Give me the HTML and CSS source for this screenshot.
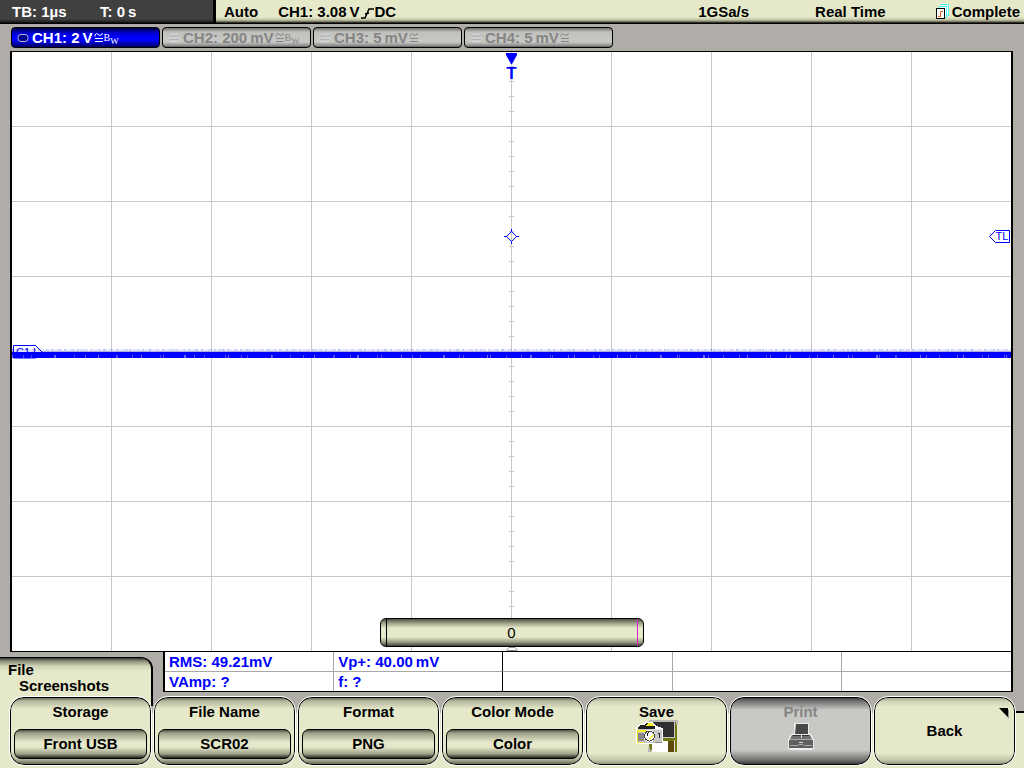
FILE: index.html
```html
<!DOCTYPE html>
<html lang="en">
<head>
<meta charset="utf-8">
<title>Oscilloscope</title>
<link rel="stylesheet" href="styles.css">
</head>
<body>
<svg class="symbols" aria-hidden="true">
  <symbol id="coupling" viewBox="0 0 9 11"><path d="M1 4.500V3L2.500 1.500L6 3.500L8 2.500V1M1 6.500H9M1 9.500H9" fill="none" stroke="currentColor"/></symbol>
  <symbol id="knob" viewBox="0 0 12 10"><path d="M3 .5H9L11.500 3V7L9 9.500H3L.5 7V3Z" fill="#d4d4d4"/><path d="M1 3H11M1 6.500H11" stroke="#b2b2b8" stroke-width="1.500"/></symbol>
</svg>
<div class="scope">
  <header class="status">
    <div class="timebase"><span class="tb">TB: 1µs</span><span>T: 0&#8201;s</span></div>
    <div class="acquisition">
      <span>Auto</span>
      <span class="trigger">CH1: 3.08&#8201;V<svg width="15" height="12" viewBox="0 0 15 12"><path d="M1 11H5L9 2H14M5 7L9 6" fill="none" stroke="#000" stroke-width="1.500"/></svg>DC</span>
      <span class="rate">1GSa/s</span>
      <span class="mode">Real Time</span>
      <span class="state"><svg width="14" height="16" viewBox="0 0 14 16"><path d="M5 1.500V.5H12.500V11.500H11M3 4V2.500H10.500V13.500H9" fill="#fff" stroke="#50f0f0"/><rect x=".5" y="4.500" width="8" height="10" fill="#fff" stroke="#000"/><path d="M2 12.500H4.500V7.500H7" fill="none" stroke="#f06010"/></svg>Complete</span>
    </div>
  </header>

  <nav class="channels">
    <button class="channel active"><svg class="knob" viewBox="0 0 12 10"><rect x="1" y="1.500" width="10" height="7" rx="3" fill="#000090" stroke="#b8b8c8"/></svg>CH1: 2&#8201;V<svg class="coupling"><use href="#coupling"/></svg><span class="bw">B<sub>W</sub></span></button>
    <button class="channel"><svg class="knob"><use href="#knob"/></svg>CH2: 200&#8201;mV<svg class="coupling"><use href="#coupling"/></svg><span class="bw">B<sub>W</sub></span></button>
    <button class="channel"><svg class="knob"><use href="#knob"/></svg>CH3: 5&#8201;mV<svg class="coupling"><use href="#coupling"/></svg></button>
    <button class="channel"><svg class="knob"><use href="#knob"/></svg>CH4: 5&#8201;mV<svg class="coupling"><use href="#coupling"/></svg></button>
  </nav>

  <main class="plot">
    <svg class="grid" aria-hidden="true">
      <g transform="translate(-1 -1)" fill="#c8c8c8">
        <rect x="10%" width="1" height="101%"/><rect x="20%" width="1" height="101%"/><rect x="30%" width="1" height="101%"/><rect x="40%" width="1" height="101%"/><rect x="50%" width="1" height="101%"/><rect x="60%" width="1" height="101%"/><rect x="70%" width="1" height="101%"/><rect x="80%" width="1" height="101%"/><rect x="90%" width="1" height="101%"/>
        <rect y="12.5%" width="101%" height="1"/><rect y="25%" width="101%" height="1"/><rect y="37.5%" width="101%" height="1"/><rect y="50%" width="101%" height="1"/><rect y="62.5%" width="101%" height="1"/><rect y="75%" width="101%" height="1"/><rect y="87.5%" width="101%" height="1"/>
      </g>
    </svg>
    <div class="ticks"></div>
    <svg class="marker position" viewBox="0 0 14 34"><path d="M1 1H12V3L7 12H6L1 3Z" fill="#00f"/><text x="6.500" y="27">T</text></svg>
    <svg class="marker crosshair" viewBox="0 0 15 15"><path d="M7.500 2.500L12.500 7.500L7.500 12.500L2.500 7.500ZM7.500 0V3M7.500 12V15M0 7.500H3M12 7.500H15" fill="none" stroke="#00f"/></svg>
    <svg class="marker level" viewBox="0 0 22 14"><path d="M20.500 .5V12.500H6.500L.5 6.500L6.500 .5Z" fill="#fff" stroke="#00f"/><text x="13" y="10">TL</text></svg>
    <svg class="marker ground" viewBox="0 0 30 14"><path d="M.5 .5H22.500L29 7L22.500 13H.5Z" fill="#fff" stroke="#00f"/><text x="3" y="11">C1 L</text></svg>
    <div class="trace"></div>
    <svg class="marker origin" viewBox="0 0 12 4"><path d="M3 .5H9L11 2.500V3.500H1V2.500Z" fill="#fff" stroke="#909090"/></svg>
    <output class="progress">0</output>
  </main>

  <div class="info">
    <h1 class="tab">File<span>Screenshots</span></h1>
    <div class="readout">
      <table class="measurements">
        <tr><td>RMS: 49.21mV</td><td>Vp+: 40.00&#8201;mV</td><td></td><td></td><td></td></tr>
        <tr><td>VAmp: ?</td><td>f: ?</td><td></td><td></td><td></td></tr>
      </table>
    </div>
  </div>

  <footer class="softkeys">
    <button class="key"><span>Storage</span><span class="value">Front USB</span></button>
    <button class="key"><span>File Name</span><span class="value">SCR02</span></button>
    <button class="key"><span>Format</span><span class="value">PNG</span></button>
    <button class="key"><span>Color Mode</span><span class="value">Color</span></button>
    <button class="key plain"><span>Save</span>
      <svg class="save" viewBox="0 0 42 34" shape-rendering="crispEdges">
        <path d="M13 1H41V32H15L13 30Z" fill="#707810"/><path d="M13 1H41V5M13 27V31H17" stroke="#b8b8b0" stroke-width="2" fill="none"/>
        <rect x="16" y="2" width="22" height="15" fill="#303030"/><path d="M38.500 2V17.500H27" stroke="#c8c8c8" fill="none"/>
        <rect x="16" y="21" width="16" height="11" fill="#fff"/><rect x="32" y="21" width="6" height="11" fill="#604808"/><path d="M38.500 20V32" stroke="#ddd"/>
        <path d="M0 8L3 4L8 3L10 2H17L20 6L27 8V24H0Z" fill="#fff"/>
        <path d="M2 7L4 5H8L10 3H16L19 7V9H2Z" fill="#202020"/><path d="M10 6L12 3H15L18 6Z" fill="#f8f020"/>
        <rect x="1" y="9" width="25" height="14" fill="#c8c8c8"/><rect x="1" y="10" width="9" height="2" fill="#f8f020"/><rect x="2" y="13" width="6" height="8" fill="#888"/><path d="M16 9.500H26" stroke="#e8e8e8"/>
        <path d="M1.500 10V22.500H8" fill="none" stroke="#e8e020"/><path d="M19 22.500H26" stroke="#888"/>
        <circle cx="13.500" cy="16" r="6" fill="#fff"/><circle cx="13.500" cy="16" r="5" fill="none" stroke="#444"/><path d="M11 16V14L13 12" fill="none" stroke="#111"/><path d="M14 19L17 15" stroke="#f8f020" stroke-width="1.500"/>
        <path d="M22 13.500H23.500V18" fill="none" stroke="#202020"/>
      </svg>
    </button>
    <button class="key disabled" disabled><span>Print</span>
      <svg class="print" viewBox="0 0 26 27"><path d="M6 0H21V10L24 12L26 17V26H24V27H2V26H0V17L2 12L6 10Z" fill="#ececec"/><path d="M8 1H20V11H7Z" fill="#484848"/><path d="M4 12H22L24 16H2Z" fill="#707070"/><path d="M1 17H25V25H1Z" fill="#606060"/><path d="M2 16.500H24M2 22.500H10L11 21.500H15L16 22.500H24" stroke="#a8a8a8" fill="none"/><path d="M5 12.500H21" stroke="#303030"/><path d="M11 19.500H15" stroke="#ddd"/><path d="M13.500 12V15" stroke="#ddd"/></svg>
    </button>
    <button class="key back plain"><span>Back</span><svg class="corner" viewBox="0 0 11 11"><path d="M2 2H10V11Z" fill="#999"/><path d="M0 0H9V9Z"/></svg></button>
  </footer>
</div>
</body>
</html>
```
FILE: styles.css
```css
* { box-sizing: border-box; }
body { margin: 0; background: #b0aca8; color: #000; font: bold 15px/18px "Liberation Sans", Arial, sans-serif; }
button { font: inherit; color: inherit; margin: 0; }
.symbols { position: absolute; width: 0; height: 0; }
.scope { display: flex; flex-direction: column; min-height: 100vh; }

.status { display: flex; gap: 3px; height: 24px; background: #000; white-space: nowrap; }
.timebase { display: flex; width: 213px; padding: 3px 12px; color: #fff; background: linear-gradient(#404040 19px, #202020 22px, #000 23px); }
.tb { width: 88px; }
.acquisition { display: flex; flex: 1; align-items: flex-start; padding: 3px 4px 0 8px; background: linear-gradient(#e6e8ca 17px, #c0c2a4 20px, #606050 22px, #000 23px); }
.trigger { margin-left: 20px; }
.trigger svg { margin: 0 0 -2px; }
.rate { margin-left: auto; }
.mode { margin-left: 66px; }
.state { display: flex; gap: 2px; margin-left: 50px; }
.state svg { margin-top: 1px; }

.channels { display: flex; gap: 2px; padding: 3px 11px; }
.channel { display: flex; align-items: center; width: 149px; height: 21px; padding: 0 5px; border: 1px solid #000; border-radius: 4px; color: #858585; background: linear-gradient(#707070, #c0c0bc 4px, #c8c8c4 14px, #888 18px, #555); white-space: nowrap; }
.channel.active { color: #fff; background: linear-gradient(#000040, #0000d0 5px, #00f 9px, #00f 12px, #000060 19px); }
.knob { width: 12px; height: 10px; margin-right: 3px; flex: none; }
.coupling { width: 9px; height: 11px; margin-left: 1px; flex: none; }
.bw { margin-left: 1px; font: 10px/15px "Liberation Serif", serif; }
.bw sub { font-size: 9px; line-height: 0; vertical-align: -3px; }

.plot { position: relative; flex: 1; min-height: 300px; margin: 0 11px 0 10px; border: solid #000; border-width: 1px 2px; background: #fff; overflow: hidden; }
.grid { position: absolute; inset: 0; width: calc(100% + 1px); height: calc(100% + 1px); }
.ticks { position: absolute; top: 0; left: calc(50% - 3px); width: 5px; height: calc(100% + 1px); background: linear-gradient(to top, #c8c8c8 1px, transparent 1px) 0 0 / 100% 2.5%; }
.marker { position: absolute; }
.marker text { font: 11px "Liberation Sans", Arial, sans-serif; fill: #00f; }
.position { top: 0; left: calc(50% - 7px); width: 14px; height: 34px; }
.position text { font-size: 17px; font-weight: bold; text-anchor: middle; }
.crosshair { top: calc(31% - 9px); left: calc(50% - 8px); width: 15px; height: 15px; }
.level { top: calc(31% - 8px); right: 0; width: 22px; height: 14px; }
.level text { text-anchor: middle; }
.ground { left: 1px; top: calc(50% - 7px); width: 30px; height: 14px; }
.trace { position: absolute; left: 0; right: 0; top: calc(50% - 3px); height: 9px; background:
  repeating-linear-gradient(90deg, #8080ff60 0 1px, transparent 1px 9px, #ffffff80 9px 10px, transparent 10px 23px) 0 0 / 211px 2px repeat-x,
  repeating-linear-gradient(90deg, #0000ff38 0 2px, #0000ff18 2px 7px, #0000ff28 7px 11px, #0000ff08 11px 13px) 0 0 / 137px 2px repeat-x,
  repeating-linear-gradient(90deg, #6868ff 0 1px, transparent 1px 19px, #4040ff 19px 20px, transparent 20px 43px) 0 6px / 173px 3px repeat-x,
  repeating-linear-gradient(90deg, transparent 0 11px, #5050ff 11px 12px, transparent 12px 31px) 0 6px / 109px 3px repeat-x,
  linear-gradient(transparent 2px, #0000ff20 2px 3px, #00f 3px); }
.origin { left: calc(50% - 6px); bottom: 0; width: 12px; height: 4px; }
.progress { position: absolute; left: calc(50% - 132px); bottom: 4px; width: 264px; height: 29px; border: 1px solid #000; border-radius: 6px; font-weight: normal; line-height: 27px; text-align: center; background:
  linear-gradient(#000, #000) 5px 0 / 1px 100% no-repeat,
  linear-gradient(#e020d0, #e020d0) 256px 0 / 1px 100% no-repeat,
  linear-gradient(#505044, #9c9e88 4px, #e6e8ca 9px, #e6e8ca 18px, #9c9e88 23px, #404038); }

.info { display: flex; align-items: flex-start; gap: 10px; height: 44px; padding-right: 11px; }
.tab { flex: none; width: 153px; height: 39px; margin: 5px 0 0; padding: 4px 8px 0; border: solid #000; border-width: 1px 2px 0 0; border-radius: 0 12px 0 0; background: linear-gradient(#303028, #8a8c78 3px, #d0d2b6 8px, #e6e8ca 13px); font: inherit; line-height: 16px; }
.tab span { display: block; padding-left: 11px; }
.readout { flex: 1; min-width: 0; }
.measurements { width: 100%; table-layout: fixed; border-collapse: separate; border-spacing: 0; border: solid #000; border-width: 0 2px 1px; background: #fff; color: #00f; white-space: nowrap; }
.measurements td { height: 19px; padding: 0 4px; line-height: 18px; border-right: 1px solid #a8a8a8; }
.measurements tr:first-child td { height: 20px; padding-top: 1px; border-bottom: 1px solid #a8a8a8; }
.measurements td:nth-child(2) { border-right-color: #000; }
.measurements td:last-child { border-right: 0; }

.softkeys { display: grid; grid-template-columns: repeat(7, 1fr); gap: 1px; padding: 0 8px 2px 9px; background:
  linear-gradient(#000, #000) 151px 0 / 2px 10px no-repeat,
  linear-gradient(#e6e8ca, #e6e8ca) 0 0 / 151px 100% no-repeat,
  linear-gradient(#b0aca8, #b0aca8) 0 0 / calc(100% - 10px) 17px no-repeat,
  linear-gradient(#b0aca8 15px, #000 15px 17px, #e6e8ca 17px); }
.key { position: relative; display: flex; flex-direction: column; align-items: center; height: 70px; padding: 6px 4px 0; border: 1px solid #fff; border-radius: 15px; box-shadow: inset 0 0 0 1px #000; background: linear-gradient(#50504a, #b4b69c 4px, #e6e8ca 12px, #e6e8ca 54px, #b4b69c 62px, #60604e); background-clip: padding-box; }
.value { align-self: stretch; height: 30px; margin-top: 8px; border: 1px solid #000; border-radius: 7px; line-height: 28px; background: linear-gradient(#505044, #9c9e88 3px, #e6e8ca 12px, #e6e8ca 17px, #9c9e88 24px, #202018); }
.plain { background-image: linear-gradient(#a0a28c, #d4d6ba 5px, #e6e8ca 10px, #e6e8ca 56px, #c4c6aa 63px, #888a76); }
.disabled { color: #858585; background-image: linear-gradient(#303030, #707070 4px, #c8c8c4 13px, #c8c8c4 53px, #707070 63px, #303030); }
.save { width: 42px; height: 34px; margin-top: -1px; }
.print { width: 26px; height: 27px; margin-top: 2px; }
.back { justify-content: center; padding: 0; }
.corner { position: absolute; top: 11px; right: 5px; width: 11px; height: 11px; }
```
